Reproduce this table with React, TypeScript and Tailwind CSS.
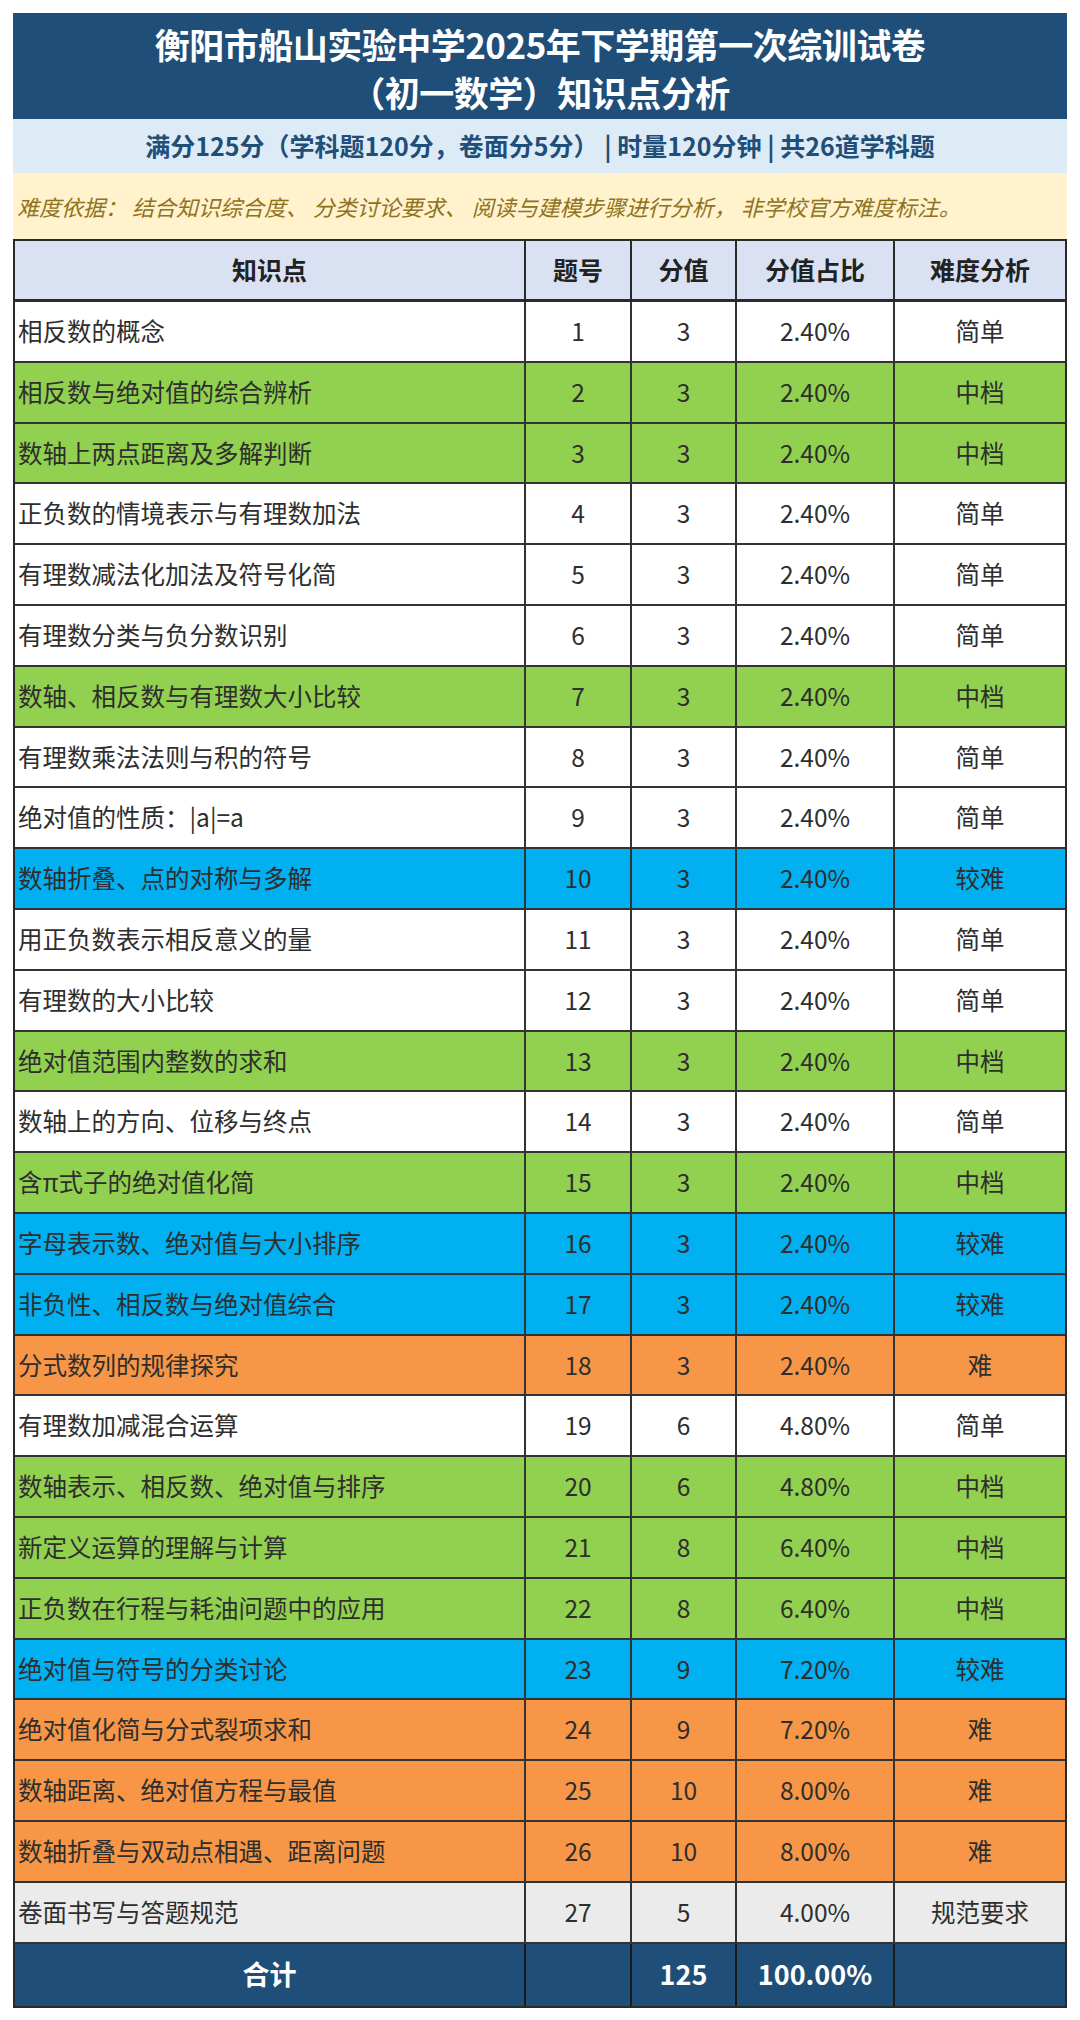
import React from "react";

type Level = "简单" | "中档" | "较难" | "难" | "规范要求";

const rows: [string, number, number, string, Level][] = [
  ["相反数的概念", 1, 3, "2.40%", "简单"],
  ["相反数与绝对值的综合辨析", 2, 3, "2.40%", "中档"],
  ["数轴上两点距离及多解判断", 3, 3, "2.40%", "中档"],
  ["正负数的情境表示与有理数加法", 4, 3, "2.40%", "简单"],
  ["有理数减法化加法及符号化简", 5, 3, "2.40%", "简单"],
  ["有理数分类与负分数识别", 6, 3, "2.40%", "简单"],
  ["数轴、相反数与有理数大小比较", 7, 3, "2.40%", "中档"],
  ["有理数乘法法则与积的符号", 8, 3, "2.40%", "简单"],
  ["绝对值的性质：|a|=a", 9, 3, "2.40%", "简单"],
  ["数轴折叠、点的对称与多解", 10, 3, "2.40%", "较难"],
  ["用正负数表示相反意义的量", 11, 3, "2.40%", "简单"],
  ["有理数的大小比较", 12, 3, "2.40%", "简单"],
  ["绝对值范围内整数的求和", 13, 3, "2.40%", "中档"],
  ["数轴上的方向、位移与终点", 14, 3, "2.40%", "简单"],
  ["含π式子的绝对值化简", 15, 3, "2.40%", "中档"],
  ["字母表示数、绝对值与大小排序", 16, 3, "2.40%", "较难"],
  ["非负性、相反数与绝对值综合", 17, 3, "2.40%", "较难"],
  ["分式数列的规律探究", 18, 3, "2.40%", "难"],
  ["有理数加减混合运算", 19, 6, "4.80%", "简单"],
  ["数轴表示、相反数、绝对值与排序", 20, 6, "4.80%", "中档"],
  ["新定义运算的理解与计算", 21, 8, "6.40%", "中档"],
  ["正负数在行程与耗油问题中的应用", 22, 8, "6.40%", "中档"],
  ["绝对值与符号的分类讨论", 23, 9, "7.20%", "较难"],
  ["绝对值化简与分式裂项求和", 24, 9, "7.20%", "难"],
  ["数轴距离、绝对值方程与最值", 25, 10, "8.00%", "难"],
  ["数轴折叠与双动点相遇、距离问题", 26, 10, "8.00%", "难"],
  ["卷面书写与答题规范", 27, 5, "4.00%", "规范要求"],
];

const bgFor = (l: Level) => {
  switch (l) {
    case "中档":
      return "bg-[#92d050]";
    case "较难":
      return "bg-[#00b0f0]";
    case "难":
      return "bg-[#f79646]";
    case "规范要求":
      return "bg-[#ebebeb]";
    default:
      return "bg-white";
  }
};

const font = { fontFamily: '"Noto Sans CJK SC", "Noto Sans", sans-serif' };

export default function App() {
  return (
    <div className="w-[1080px] h-[2020px] bg-white pt-[13px] pl-[13px]" style={font}>
      <div className="w-[1054px]">
        <div className="h-[106px] bg-[#1f4e79] flex flex-col items-center justify-center text-white font-bold text-[35px] leading-[48px] pt-[4px] tracking-[-0.5px]">
          <div>衡阳市船山实验中学2025年下学期第一次综训试卷</div>
          <div>（初一数学）知识点分析</div>
        </div>
        <div className="h-[54px] bg-[#ddebf7] flex items-center justify-center text-[#1f4e79] font-bold text-[25px]">
          满分125分（学科题120分，卷面分5分） | 时量120分钟 | 共26道学科题
        </div>
        <div className="h-[66px] bg-[#fff2cc] flex items-center pl-[4px] text-[#8f7320] italic text-[22px]">
          难度依据： 结合知识综合度、 分类讨论要求、 阅读与建模步骤进行分析， 非学校官方难度标注。
        </div>
        <div className="border-2 border-[#2a2a2a]">
          <div className="grid grid-cols-[511px_106px_105px_158px_170px] h-[61px] bg-[#d9e1f2] border-b-[3px] border-[#2a2a2a] font-bold text-[25px] text-[#222]">
            <div className="flex items-center justify-center border-r-2 border-[#2a2a2a]">知识点</div>
            <div className="flex items-center justify-center border-r-2 border-[#2a2a2a]">题号</div>
            <div className="flex items-center justify-center border-r-2 border-[#2a2a2a]">分值</div>
            <div className="flex items-center justify-center border-r-2 border-[#2a2a2a]">分值占比</div>
            <div className="flex items-center justify-center">难度分析</div>
          </div>
          {rows.map(([name, no, score, pct, lvl]) => (
            <div
              key={no}
              className={`grid grid-cols-[511px_106px_105px_158px_170px] h-[60.8px] border-b-2 border-[#333] text-[24.5px] text-[#2e2e2e] ${bgFor(lvl)}`}
            >
              <div className="flex items-center pl-[3px] border-r-2 border-[#333]">{name}</div>
              <div className="flex items-center justify-center border-r-2 border-[#333]">{no}</div>
              <div className="flex items-center justify-center border-r-2 border-[#333]">{score}</div>
              <div className="flex items-center justify-center border-r-2 border-[#333]">{pct}</div>
              <div className="flex items-center justify-center">{lvl}</div>
            </div>
          ))}
          <div className="grid grid-cols-[511px_106px_105px_158px_170px] h-[62px] bg-[#1f4e79] text-white font-bold text-[27px]">
            <div className="flex items-center justify-center border-r-2 border-[#1a1a1a]">合计</div>
            <div className="flex items-center justify-center border-r-2 border-[#1a1a1a]"></div>
            <div className="flex items-center justify-center border-r-2 border-[#1a1a1a]">125</div>
            <div className="flex items-center justify-center border-r-2 border-[#1a1a1a]">100.00%</div>
            <div className="flex items-center justify-center"></div>
          </div>
        </div>
      </div>
    </div>
  );
}
